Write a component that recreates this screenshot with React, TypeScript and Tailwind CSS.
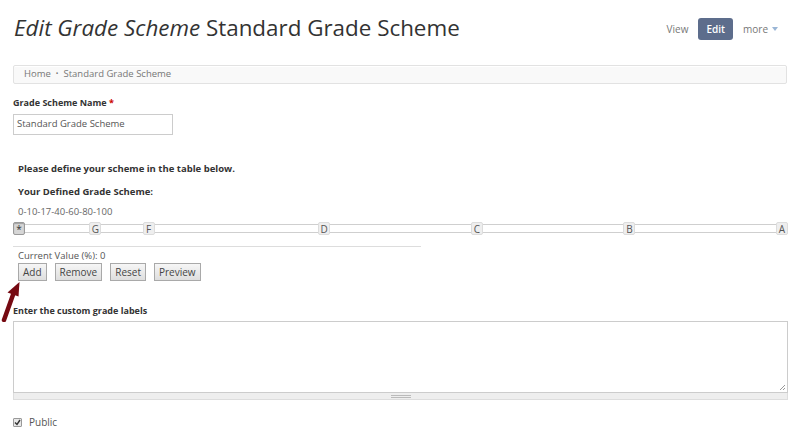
import React from 'react';

// grade boundaries shown on the slider (percent)
const handles = [
  { label: '*', pct: 0, active: true },
  { label: 'G', pct: 10 },
  { label: 'F', pct: 17 },
  { label: 'D', pct: 40 },
  { label: 'C', pct: 60 },
  { label: 'B', pct: 80 },
  { label: 'A', pct: 100 },
];

function GradeSlider() {
  return (
    <div className="relative h-[13px] w-[775px]">
      <div className="absolute left-0 right-0 top-[2px] h-[9px] border border-[#cfcfcf] bg-white" />
      {handles.map((h) => (
        <div
          key={h.label}
          className={
            'absolute top-0 flex h-[13px] w-[12px] items-center justify-center rounded-[2px] border text-[10px] leading-none ' +
            (h.active
              ? 'border-[#9a9a9a] bg-[#d6d6d6] text-[#333] shadow-[inset_0_1px_1px_rgba(0,0,0,0.25)]'
              : 'border-[#dcdcdc] bg-[#eeeeee] text-[#555]')
          }
          style={{ left: `${(h.pct * 763) / 100}px` }}
        >
          {h.label}
        </div>
      ))}
    </div>
  );
}

function Btn({ children }: { children: React.ReactNode }) {
  return (
    <button className="h-[18px] border border-[#a9a9a9] bg-gradient-to-b from-[#f6f6f6] to-[#dedede] px-[4px] text-[10px] leading-none text-[#444]">
      {children}
    </button>
  );
}

export default function App() {
  return (
    <div className="relative h-[432px] w-[800px] overflow-hidden bg-white font-['Open_Sans',sans-serif] text-[#333]">
      {/* header */}
      <div className="flex items-start justify-between pl-[14px] pr-[22px] pt-[12px]">
        <h1 className="text-[22.4px] leading-[32px] font-normal text-[#333]">
          <em>Edit Grade Scheme</em> Standard Grade Scheme
        </h1>
        <div className="mt-[6px] flex items-center text-[10px] text-[#777]">
          <span className="mr-[10px]">View</span>
          <span className="flex h-[22px] items-center rounded-[3px] bg-[#5d6d8c] px-[8px] text-[10px] font-semibold text-white">Edit</span>
          <span className="ml-[10px] flex items-center gap-[4px]">
            more
            <svg width="6" height="4" viewBox="0 0 6 4"><path d="M0 0h6L3 4z" fill="#9ab6d6" /></svg>
          </span>
        </div>
      </div>

      {/* breadcrumb */}
      <div className="ml-[13px] mt-[21px] flex h-[19px] w-[774px] items-center rounded-[2px] border border-[#e2e2e2] bg-[#f9f9f9] pl-[10px] text-[9.5px] text-[#777] shadow-[inset_0_1px_0_#fff]">
        <span>Home</span>
        <span className="mx-[5px] text-[7px]">•</span>
        <span>Standard Grade Scheme</span>
      </div>

      <div className="pl-[13px]">
        <div className="mt-[13px] text-[9px] font-bold leading-[12px] text-[#333]">
          Grade Scheme Name <span className="text-[#c00]">*</span>
        </div>
        <div className="mt-[5px] flex h-[21px] w-[160px] items-center border border-[#ccc] pl-[3px] text-[9.5px] text-[#555]">
          Standard Grade Scheme
        </div>

        <div className="pl-[5px]">
          <div className="mt-[27px] text-[9.5px] font-bold leading-[14px] text-[#333]">Please define your scheme in the table below.</div>
          <div className="mt-[9px] text-[9.5px] font-bold leading-[14px] text-[#333]">Your Defined Grade Scheme:</div>
          <div className="mt-[6px] text-[9.5px] leading-[14px] text-[#666]">0-10-17-40-60-80-100</div>
        </div>

        <div className="mt-[3px]">
          <GradeSlider />
        </div>

        <div className="mt-[11px] h-px w-[408px] bg-[#ddd]" />

        <div className="pl-[5px]">
          <div className="mt-[2px] text-[9.5px] leading-[13px] text-[#555]">Current Value (%): 0</div>
          <div className="mt-[1px] flex gap-[8px]">
            <Btn>Add</Btn>
            <Btn>Remove</Btn>
            <Btn>Reset</Btn>
            <Btn>Preview</Btn>
          </div>
        </div>

        <div className="mt-[24px] text-[9px] font-bold leading-[12px] text-[#333]">Enter the custom grade labels</div>
        <div className="mt-[4px] w-[775px]">
          <div className="relative h-[72px] border border-[#ccc] bg-white">
            <svg className="absolute bottom-[1px] right-[1px]" width="7" height="7" viewBox="0 0 7 7">
              <path d="M6 1L1 6M6 4L4 6" stroke="#999" strokeWidth="1" />
            </svg>
          </div>
          <div className="flex h-[7px] items-center justify-center border-x border-b border-[#ddd] bg-[#eeeeee]">
            <div className="flex w-[20px] flex-col gap-[1px]">
              <div className="h-px bg-[#bbb]" />
              <div className="h-px bg-[#bbb]" />
            </div>
          </div>
        </div>

        <label className="mt-[16px] flex items-center gap-[7px] text-[10px] leading-[13px] text-[#555]">
          <span className="flex h-[9px] w-[9px] items-center justify-center rounded-[1px] border border-[#999] bg-[#e8e8e8]">
            <svg width="7" height="7" viewBox="0 0 7 7"><path d="M1 3.5L3 5.5L6 1" stroke="#333" strokeWidth="1.4" fill="none" /></svg>
          </span>
          Public
        </label>
      </div>

      {/* annotation arrow */}
      <svg className="absolute left-0 top-[278px]" width="26" height="44" viewBox="0 0 26 44">
        <path d="M4 42L14 14" stroke="#760a12" strokeWidth="4.5" strokeLinecap="round" />
        <path d="M19.5 4L7.5 14.5L18.5 18.5z" fill="#760a12" />
      </svg>
    </div>
  );
}
